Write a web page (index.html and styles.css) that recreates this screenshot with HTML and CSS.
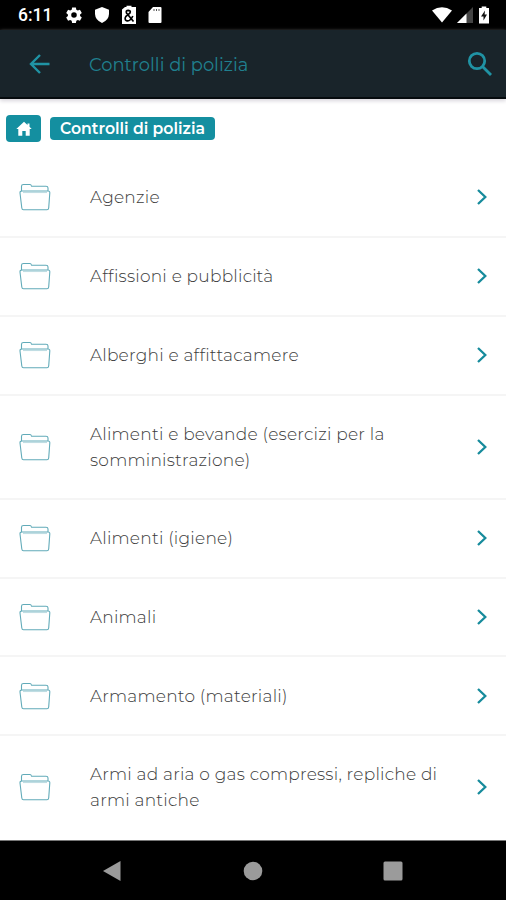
FILE: index.html
```html
<!DOCTYPE html>
<html lang="it">
<head>
    <meta charset="UTF-8">
    <meta name="viewport" content="width=device-width, initial-scale=1.0">
    <title>Controlli di polizia</title>
    <link rel="stylesheet" href="styles.css">
</head>
<body>
    <!-- Shared icons -->
    <svg class="hidden">
        <symbol id="folder" viewBox="0 0 32 28">
            <path d="M2.500 8V3.200Q2.500 1.500 4.500 1.500H11Q12 1.500 12.600 3.300H27Q29 3.300 29 5V8M3 8H29Q31 8 30.800 10L29.700 25Q29.500 26.800 28 26.800H4.500Q3 26.800 2.800 25L1 10Q.8 8 3 8Z"/>
            <path d="M4 9.500H28" opacity=".4"/>
        </symbol>
        <symbol id="chevron" viewBox="0 0 12 18">
            <path d="M2 2L9.300 9L2 16"/>
        </symbol>
    </svg>

    <div class="status-bar">
        <span class="time">6:11</span>
        <div class="status-left">
            <svg width="18" height="18" viewBox="0 0 24 24"><path fill="#fff" fill-rule="evenodd" d="M9.500 2h5l.6 3 2 1.100 2.800-1 2.500 4.200-2.300 2v2l2.300 2-2.500 4.200-2.800-1-2 1.100-.6 2.900h-5l-.6-2.900-2-1.100-2.800 1-2.500-4.200 2.300-2v-2l-2.300-2 2.500-4.200 2.800 1 2-1.100zM12 8.400a3.700 3.700 0 1 0 0 7.400 3.700 3.700 0 0 0 0-7.400z"/></svg>
            <svg width="16" height="18" viewBox="0 0 16 18"><path fill="#fff" d="M8 1L15 3.800V8Q14.800 14 8 17Q1.200 14 1 8V3.800Z"/></svg>
            <svg width="16" height="20" viewBox="0 0 16 20"><path fill="#fff" d="M1 4.500L4 2H5.500V.8H10.500V2H15V19H1Z"/><path class="ampersand" d="M12.500 16.500L5.500 8Q4.500 5.500 7.300 5.300Q10.300 5.700 8.800 8.200L5 11.300Q3 14.200 5.500 15.700Q9 16.900 11.800 11"/></svg>
            <svg width="14" height="18" viewBox="0 0 14 18"><path fill="#fff" d="M5 1H12.500Q13.500 1 13.500 2V16Q13.500 17 12.500 17H1.500Q.5 17 .5 16V6Z"/><path stroke="#555" d="M6 3v2M8.500 3v2M11 3v2"/></svg>
        </div>
        <div class="status-right">
            <svg width="20" height="16" viewBox="0 0 20 16"><path fill="#fff" d="M0 3.500Q10-3 20 3.500L10 15.500Z"/></svg>
            <svg width="16" height="16" viewBox="0 0 16 16"><path fill="#444" d="M0 16L16 0V16Z"/><path fill="#fff" d="M0 16L9.500 6.500V16Z"/></svg>
            <svg width="12" height="18" viewBox="0 0 12 18"><path fill="#fff" d="M1 2H3.700V.5H8.300V2H11V17.500H1Z"/><path fill="#111" d="M7 4.500L3 10.500H5.500V14.500L9 8.500H6.600Z"/></svg>
        </div>
    </div>

    <header class="toolbar">
        <svg class="back" width="22" height="20" viewBox="0 0 22 20"><path d="M20.500 10H2M11 1L2 10L11 19"/></svg>
        <h1>Controlli di polizia</h1>
        <svg class="search" width="26" height="26" viewBox="0 0 26 26"><circle cx="10" cy="10" r="7.700"/><path d="M15.500 15.500L24 24"/></svg>
    </header>

    <nav class="breadcrumb">
        <a class="home"><svg width="16" height="16" viewBox="0 0 16 16"><path fill="#fff" d="M8 .8L11.500 4V2.500H13.500V5.800L15.700 8H13.700V14.800H9.700V10H6.300V14.800H2.300V8H.3Z"/></svg></a>
        <a class="crumb">Controlli di polizia</a>
    </nav>

    <ul class="list">
        <li>
            <svg class="folder"><use href="#folder"/></svg>
            <span class="label">Agenzie</span>
            <svg class="chevron"><use href="#chevron"/></svg>
        </li>
        <li>
            <svg class="folder"><use href="#folder"/></svg>
            <span class="label">Affissioni e pubblicità</span>
            <svg class="chevron"><use href="#chevron"/></svg>
        </li>
        <li>
            <svg class="folder"><use href="#folder"/></svg>
            <span class="label">Alberghi e affittacamere</span>
            <svg class="chevron"><use href="#chevron"/></svg>
        </li>
        <li class="tall">
            <svg class="folder"><use href="#folder"/></svg>
            <span class="label">Alimenti e bevande (esercizi per la<br>somministrazione)</span>
            <svg class="chevron"><use href="#chevron"/></svg>
        </li>
        <li>
            <svg class="folder"><use href="#folder"/></svg>
            <span class="label">Alimenti (igiene)</span>
            <svg class="chevron"><use href="#chevron"/></svg>
        </li>
        <li>
            <svg class="folder"><use href="#folder"/></svg>
            <span class="label">Animali</span>
            <svg class="chevron"><use href="#chevron"/></svg>
        </li>
        <li>
            <svg class="folder"><use href="#folder"/></svg>
            <span class="label">Armamento (materiali)</span>
            <svg class="chevron"><use href="#chevron"/></svg>
        </li>
        <li class="tall">
            <svg class="folder"><use href="#folder"/></svg>
            <span class="label">Armi ad aria o gas compressi, repliche di<br>armi antiche</span>
            <svg class="chevron"><use href="#chevron"/></svg>
        </li>
    </ul>

    <footer class="nav-bar">
        <svg width="20" height="22" viewBox="0 0 20 22"><path d="M1 11L18.500 1V21Z"/></svg>
        <svg width="20" height="20" viewBox="0 0 20 20"><circle cx="10" cy="10" r="9.300"/></svg>
        <svg width="20" height="20" viewBox="0 0 20 20"><rect x=".5" y=".5" width="19" height="19" rx="1.500"/></svg>
    </footer>
</body>
</html>
```

FILE: styles.css
```css
* {
    box-sizing: border-box;
}

body {
    display: flex;
    flex-direction: column;
    height: 900px;
    margin: 0;
    overflow: hidden;
    background-color: #fff;
    font-family: Montserrat, Inter, sans-serif;
}

svg {
    display: block;
    flex: none;
}

.hidden {
    display: none;
}

.status-bar {
    display: flex;
    align-items: center;
    height: 30px;
    padding: 0 16px 0 18px;
    background-color: #000;
    color: #fff;
}

.time {
    width: 47px;
    font-family: Roboto, sans-serif;
    font-size: 17.5px;
    font-weight: 500;
}

.status-left {
    display: flex;
    align-items: center;
    gap: 11px;
}

.ampersand {
    fill: none;
    stroke: #000;
    stroke-width: 1.7;
}

.status-right {
    display: flex;
    align-items: center;
    gap: 5px;
    margin-left: auto;
}

.toolbar {
    display: flex;
    align-items: center;
    height: 69px;
    padding: 1px 13px 0 29px;
    background-color: #19242a;
    border-bottom: 2px solid #060b0e;
    box-shadow: 0 2px 4px #d8d6dc;
}

.toolbar h1 {
    margin: 0 0 0 38px;
    color: #20808f;
    font-size: 17.9px;
    font-weight: 400;
}

.back,
.search {
    fill: none;
    stroke: #2093a4;
    stroke-width: 2.4;
}

.search {
    margin-left: auto;
    stroke-width: 2.8;
}

.breadcrumb {
    display: flex;
    align-items: center;
    gap: 9px;
    height: 60px;
    padding: 0 6px 1px;
}

.home,
.crumb {
    display: flex;
    align-items: center;
    justify-content: center;
    background-color: #148fa0;
    border-radius: 4px;
}

.home {
    width: 35px;
    height: 27px;
}

.crumb {
    width: 165px;
    height: 23px;
    color: #fff;
    font-size: 15.7px;
    font-weight: 600;
}

.list {
    margin: 0;
    padding: 0;
    list-style: none;
}

.list li {
    display: flex;
    align-items: center;
    height: 78.9px;
    padding: 0 18px 0 19px;
    border-bottom: 2px solid #f5f5f5;
}

.list .tall {
    height: 104px;
}

.list li:last-child {
    border-bottom-color: #fff;
}

.folder {
    width: 32px;
    height: 28px;
    fill: none;
    stroke: #62abb9;
    stroke-width: 1.1;
}

.label {
    flex: 1;
    margin-left: 39px;
    color: #3c3c3c;
    font-size: 17px;
    font-weight: 300;
    line-height: 26px;
    letter-spacing: 0.23px;
    white-space: nowrap;
}

.chevron {
    width: 12px;
    height: 18px;
    fill: none;
    stroke: #168b9c;
    stroke-width: 2.3;
}

.nav-bar {
    display: flex;
    align-items: center;
    justify-content: space-between;
    flex: 1;
    padding: 0 103px 0 102px;
    background-color: #000;
    border-top: 1px solid #777;
    fill: #9b9b9b;
}
```
